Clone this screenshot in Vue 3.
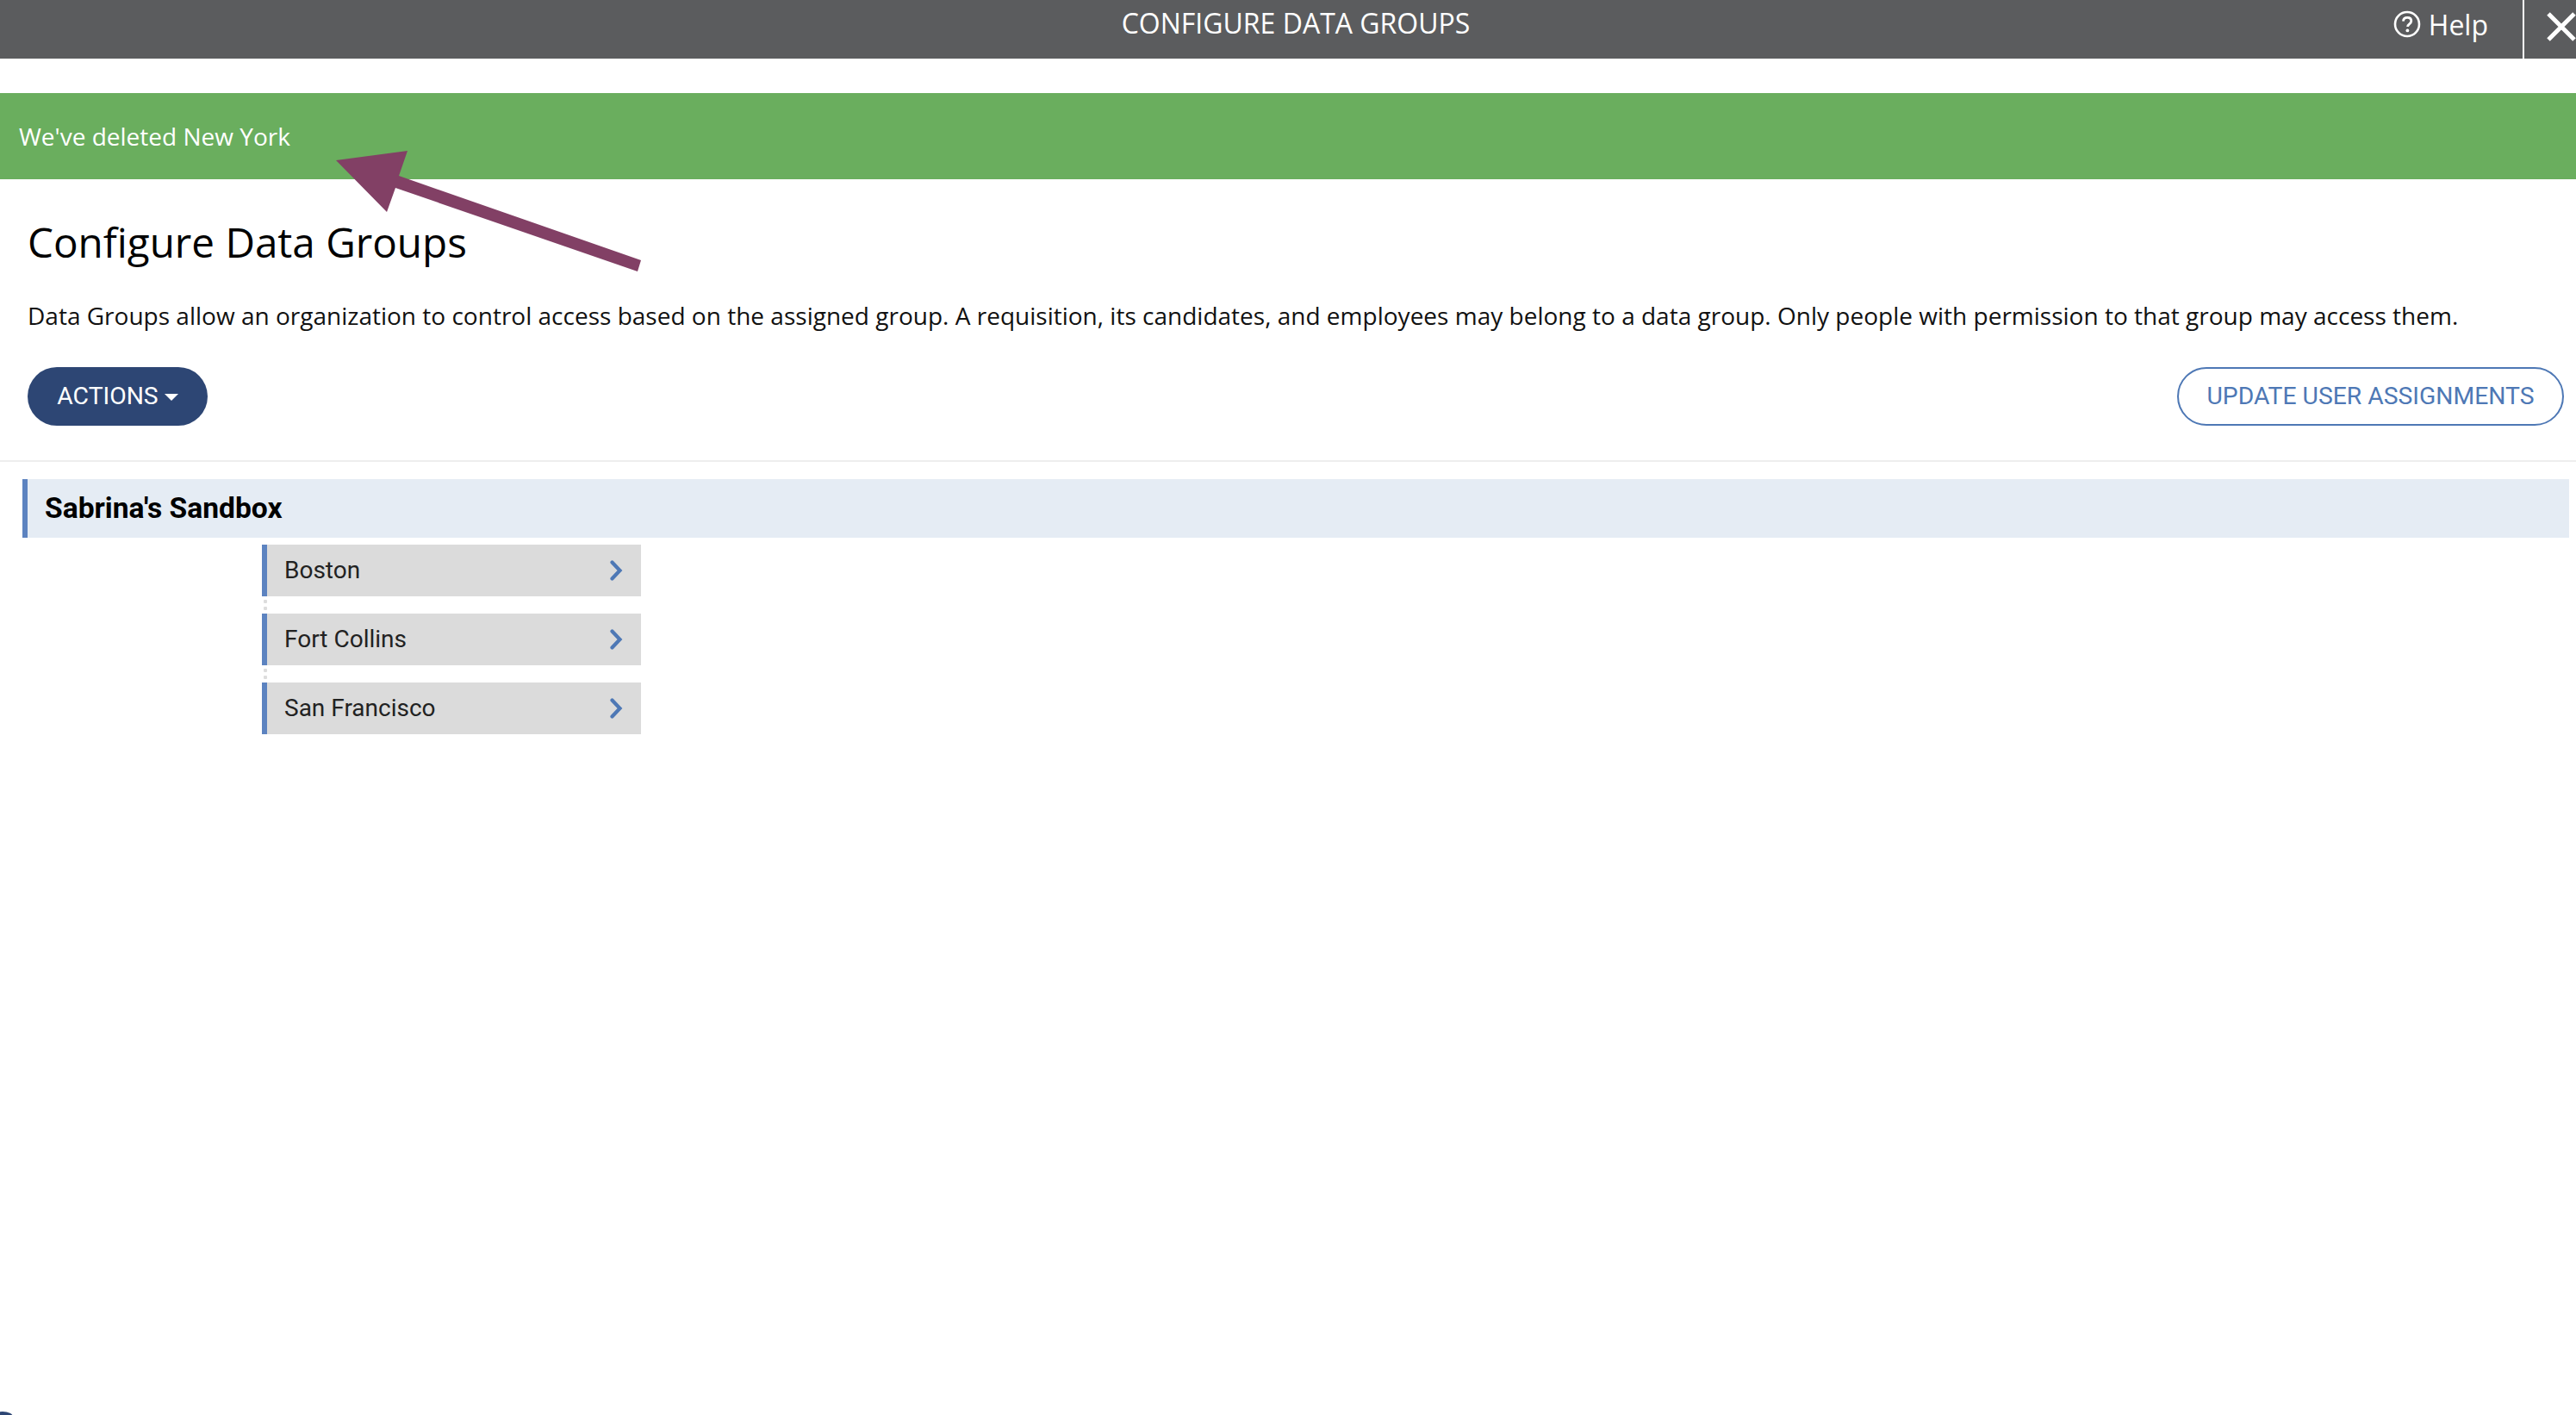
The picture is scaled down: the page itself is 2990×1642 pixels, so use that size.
<template>
  <div class="page">
    <header class="topbar">
      <span class="topbar-title">CONFIGURE DATA GROUPS</span>
      <div class="topbar-right">
        <a class="help">
          <svg class="help-icon" viewBox="0 0 32 32" width="32" height="32">
            <circle cx="16" cy="16" r="14" fill="none" stroke="#fff" stroke-width="2.6" />
            <path d="M11.4 12.6c.3-2.7 2.2-4.2 4.8-4.2 2.7 0 4.6 1.5 4.6 3.9 0 1.9-1 2.8-2.4 3.8-1.3.9-1.8 1.5-1.8 3" fill="none" stroke="#fff" stroke-width="2.8" />
            <circle cx="16.4" cy="23.4" r="1.9" fill="#fff" />
          </svg>
          <span>Help</span>
        </a>
        <button class="close" aria-label="Close">
          <svg viewBox="0 0 36 36" width="36" height="36">
            <path d="M3 3 L33 33 M33 3 L3 33" fill="none" stroke="#fff" stroke-width="5" />
          </svg>
        </button>
      </div>
    </header>

    <div class="alert">We've deleted New York</div>

    <section class="intro">
      <h1>Configure Data Groups</h1>
      <p>Data Groups allow an organization to control access based on the assigned group. A requisition, its candidates, and employees may belong to a data group. Only people with permission to that group may access them.</p>
      <div class="toolbar">
        <button class="btn-actions">ACTIONS<span class="caret"></span></button>
        <button class="btn-update">UPDATE USER ASSIGNMENTS</button>
      </div>
    </section>

    <div class="tree">
      <div class="root-node">Sabrina's Sandbox</div>
      <ul class="children">
        <li v-for="group in groups" :key="group" class="child">
          <span>{{ group }}</span>
          <svg viewBox="0 0 15 24" width="15" height="24">
            <path d="M2.5 2.5 L11.5 12 L2.5 21.5" fill="none" stroke="#4e78b5" stroke-width="4.2" stroke-linecap="round" />
          </svg>
        </li>
      </ul>
    </div>

    <svg class="arrow" viewBox="0 0 800 340" width="800" height="340">
      <polygon points="390,186 473,175 463,204 744,302 740,315 459,218 449,246" fill="#824065" />
    </svg>
    <div class="corner"></div>
  </div>
</template>

<script setup>
const groups = ['Boston', 'Fort Collins', 'San Francisco'];
</script>

<style>
html, body {
  background: #fff;
}
</style>

<style scoped>
.page {
  position: relative;
  height: 1642px;
  overflow: hidden;
  background: #fff;
  font-family: "Open Sans", sans-serif;
}

.topbar {
  position: relative;
  height: 68px;
  padding-left: 18px;
  background: #5b5c5e;
  color: #fff;
  display: flex;
  justify-content: center;
}

.topbar-title {
  font-size: 32px;
  line-height: 54px;
}

.topbar-right {
  position: absolute;
  top: 0;
  right: 0;
  height: 68px;
  display: flex;
}

.help {
  display: flex;
  align-items: center;
  gap: 9px;
  height: 56px;
  padding-right: 40px;
  font-size: 32px;
}

.close {
  width: 62px;
  height: 68px;
  padding: 0 0 7px 25px;
  border: 0;
  border-left: 2px solid #fff;
  background: none;
  display: block;
}

.close svg {
  display: block;
}

.alert {
  margin-top: 40px;
  height: 100px;
  padding-left: 22px;
  background: #6aae5e;
  color: #fff;
  font-size: 28px;
  line-height: 100px;
}

.intro {
  padding: 0 14px 40px 32px;
  border-bottom: 2px solid #eee;
}

h1 {
  margin: 0;
  padding-top: 35px;
  font-size: 47.6px;
  font-weight: 400;
  line-height: 76px;
  color: #000;
}

p {
  margin: 25px 0 0;
  font-size: 28.02px;
  line-height: 44px;
  color: #111;
}

.toolbar {
  margin-top: 38px;
  display: flex;
  justify-content: space-between;
}

.btn-actions,
.btn-update {
  height: 68px;
  padding-bottom: 3px;
  border-radius: 34px;
  font-family: Roboto, sans-serif;
  font-size: 28.3px;
}

.btn-actions {
  width: 209px;
  border: 0;
  background: #2d4674;
  color: #fff;
}

.caret {
  display: inline-block;
  margin-left: 7px;
  vertical-align: middle;
  border-top: 8px solid #fff;
  border-left: 8px solid transparent;
  border-right: 8px solid transparent;
}

.btn-update {
  width: 449px;
  border: 2px solid #4e78b5;
  background: #fff;
  color: #4e78b5;
}

.tree {
  padding: 20px 8px 0 26px;
}

.root-node {
  height: 68px;
  padding-left: 20px;
  border-left: 6px solid #5c83c0;
  background: #e5ecf4;
  color: #000;
  font-family: Roboto, sans-serif;
  font-size: 33.6px;
  font-weight: 700;
  line-height: 67px;
}

.children {
  list-style: none;
  margin: 8px 0 0 278px;
  padding: 0;
}

.child {
  position: relative;
  width: 440px;
  height: 60px;
  box-sizing: border-box;
  padding: 0 21px 0 20px;
  border-left: 6px solid #5c83c0;
  background: #dbdbdb;
  display: flex;
  align-items: center;
  justify-content: space-between;
  color: #222;
  font-family: Roboto, sans-serif;
  font-size: 28px;
}

.child span {
  margin-top: -2px;
}

.child + .child {
  margin-top: 20px;
}

.child + .child::before {
  content: "";
  position: absolute;
  left: -4px;
  top: -16px;
  width: 4px;
  height: 12px;
  background: radial-gradient(circle at 2px 2px, #ddd 2px, transparent 2.5px) 0 0 / 4px 8px;
}

.arrow {
  position: absolute;
  top: 0;
  left: 0;
}

.corner {
  position: absolute;
  left: -9px;
  bottom: -8px;
  width: 24px;
  height: 12px;
  border-radius: 50%;
  background: #2d4674;
}
</style>
